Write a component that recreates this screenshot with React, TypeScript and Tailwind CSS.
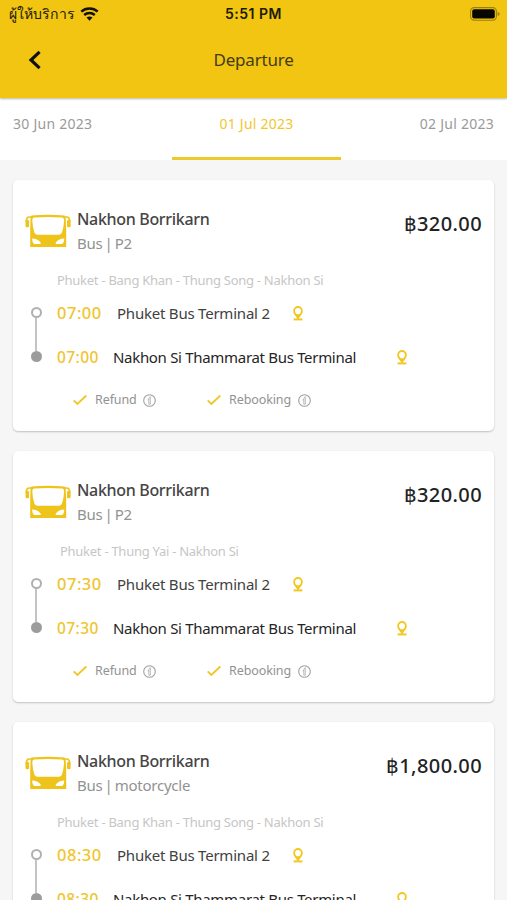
interface Trip {
  operator: string;
  vehicle: string;
  price: string;
  route: string;
  routeIndent?: boolean;
  time: string;
}

const dates = ['30 Jun 2023', '01 Jul 2023', '02 Jul 2023'];

const trips: Trip[] = [
  { operator: 'Nakhon Borrikarn', vehicle: 'Bus | P2', price: '320.00', route: 'Phuket - Bang Khan - Thung Song - Nakhon Si', time: '07:00' },
  { operator: 'Nakhon Borrikarn', vehicle: 'Bus | P2', price: '320.00', route: 'Phuket - Thung Yai - Nakhon Si', routeIndent: true, time: '07:30' },
  { operator: 'Nakhon Borrikarn', vehicle: 'Bus | motorcycle', price: '1,800.00', route: 'Phuket - Bang Khan - Thung Song - Nakhon Si', time: '08:30' },
];

function WifiIcon() {
  return (
    <svg width="19" height="15" viewBox="0 0 19 15" fill="none" stroke="#151000" className="shrink-0">
      <path d="M1.3 4.6C5.9 .5 13.1 .5 17.7 4.6" strokeWidth="2.5" />
      <path d="M4.2 8C7.2 5.3 11.8 5.3 14.8 8" strokeWidth="2.4" />
      <path d="M9.5 13.8L6.5 10.6Q9.5 8.3 12.5 10.6Z" fill="#151000" stroke="none" />
    </svg>
  );
}

function BatteryIcon() {
  return (
    <svg width="30" height="14" viewBox="0 0 30 14" className="shrink-0">
      <rect x=".6" y=".6" width="25.8" height="12.6" rx="3.6" fill="none" stroke="#9c7f10" strokeWidth="1.1" />
      <rect x="2.2" y="2.2" width="22.6" height="9.4" rx="2" fill="#080600" />
      <path d="M27.6 4.7Q29.6 5.4 29.6 6.9T27.6 9.1Z" fill="#9c7f10" />
    </svg>
  );
}

function BusIcon() {
  return (
    <svg width="46" height="34" viewBox="0 0 46 34" className="shrink-0">
      <path
        fillRule="evenodd"
        fill="#eec41b"
        d="M6.5 1.4Q23 -.1 39.5 1.4L40.6 3.2L41.2 15V33H5.2V15L5.6 3.2ZM9 3.6Q7.3 3.8 7.3 6.5Q7.6 13 9.4 18.6Q10.1 20.7 12 20.7H34.4Q36.3 20.7 37 18.6Q38.8 13 39.1 6.5Q39.1 3.8 37.4 3.6Q23 2.6 9 3.6ZM7.2 24.6Q12.5 24.8 15.6 28.5Q16.2 29.8 15 30H9Q7 28 7.2 24.6ZM39.2 24.6Q33.9 24.8 30.8 28.5Q30.2 29.8 31.4 30H37.4Q39.4 28 39.2 24.6Z"
      />
      <path d="M7 3H4.2Q1.6 3.2 1.4 6.4V8M39.4 3H41.8Q44.4 3.2 44.6 6.4V8" fill="none" stroke="#eec41b" strokeWidth="1.7" />
      <rect x=".5" y="6" width="3.6" height="7.2" rx="1.2" fill="#eec41b" />
      <rect x="42" y="6" width="3.6" height="7.2" rx="1.2" fill="#eec41b" />
    </svg>
  );
}

function PinIcon() {
  return (
    <svg width="10" height="15" viewBox="0 0 10 15" fill="none" stroke="#f2c722" className="shrink-0">
      <path d="M5 11.6L2.1 7.9Q1.1 6.5 1.1 4.8A3.9 3.8 0 0 1 8.9 4.8Q8.9 6.5 7.9 7.9Z" strokeWidth="1.8" />
      <path d="M2.6 8.3H7.4L5.8 12.4H4.2Z" fill="#f2c722" stroke="none" />
      <path d="M.6 13.4H9.4" strokeWidth="2" />
    </svg>
  );
}

function CheckIcon() {
  return (
    <svg width="14" height="12" viewBox="0 0 14 12" fill="none" stroke="#f0c62a" strokeWidth="1.9" className="shrink-0">
      <path d="M.7 6.3L4.4 10L13.3 1.5" />
    </svg>
  );
}

function InfoIcon() {
  return (
    <svg width="13" height="13" viewBox="0 0 13 13" fill="none" stroke="#a0a0a0" className="shrink-0">
      <circle cx="6.5" cy="6.5" r="5.8" strokeWidth="1.1" />
      <path d="M8.3 3Q6 2.4 5.8 4.8V10.2H7.3V3.6M4.6 5.8H5.8" strokeWidth=".7" />
    </svg>
  );
}

function Perk({ label, className }: { label: string; className: string }) {
  return (
    <div className={`flex items-center ${className}`}>
      <CheckIcon />
      <span className="ml-2 flex-1 whitespace-nowrap text-[12.5px] tracking-[-0.1px] text-[#929292]">{label}</span>
      <InfoIcon />
    </div>
  );
}

function TripCard({ trip }: { trip: Trip }) {
  return (
    <article className="h-[251px] shrink-0 rounded-[5px] bg-white pt-[27px] shadow-[0_1px_2px_rgba(0,0,0,0.22)]">
      <div className="flex h-[50px] pl-3 pr-3">
        <div className="pt-[7px]">
          <BusIcon />
        </div>
        <div className="ml-1.5 flex-1 whitespace-nowrap leading-[25px]">
          <h2 className="text-base font-medium tracking-[-0.32px] text-[#454545]">{trip.operator}</h2>
          <p className="text-[15px] tracking-[-0.25px] [word-spacing:-1.5px] text-[#929292]">{trip.vehicle}</p>
        </div>
        <div className="pt-1 text-xl font-medium leading-[26px] tracking-[0.4px] text-[#222]">฿{trip.price}</div>
      </div>

      <p className={`mt-[13px] h-5 whitespace-nowrap text-[13px] leading-5 tracking-[-0.27px] text-[#c6c6c6] ${trip.routeIndent ? 'pl-[47px]' : 'pl-11'}`}>
        {trip.route}
      </p>

      <div className="flex h-[89px]">
        <div className="flex w-11 flex-col items-center pl-0.5 pt-[17px]">
          <div className="size-[11px] shrink-0 rounded-full border-2 border-[#b0b0b0]" />
          <div className="h-[33px] w-[1.5px] bg-[#c3c3c3]" />
          <div className="size-[11px] shrink-0 rounded-full bg-[#9c9c9c]" />
        </div>
        <div className="flex-1 whitespace-nowrap">
          <div className="flex h-11 items-center pt-[3px]">
            <span className="w-[60px] text-[16.5px] font-medium tracking-[0.5px] text-[#f0c52e]">{trip.time}</span>
            <span className="w-[176px] text-[15px] tracking-[-0.22px] text-[#414141]">Phuket Bus Terminal 2</span>
            <PinIcon />
          </div>
          <div className="flex h-11 items-center pt-[3px]">
            <span className="w-14 text-[15.5px] font-medium tracking-[0.4px] text-[#f0c52e]">{trip.time}</span>
            <span className="w-[284px] text-[15px] tracking-[-0.31px] text-[#252525]">Nakhon Si Thammarat Bus Terminal</span>
            <PinIcon />
          </div>
        </div>
      </div>

      <div className="flex h-[42px] items-center pl-[60px]">
        <Perk label="Refund" className="w-[83px]" />
        <Perk label="Rebooking" className="ml-[51px] w-[104px]" />
      </div>
    </article>
  );
}

export default function App() {
  return (
    <div className="h-[900px] w-[507px] overflow-hidden bg-[#f6f6f6] font-['Noto_Sans','Open_Sans',sans-serif]">
      <header className="relative h-[98px] bg-[#f1c512] shadow-[0_1px_2px_rgba(90,80,20,0.4)]">
        <div className="grid h-7 grid-cols-3 items-center text-sm text-[#201a04]">
          <div className="flex items-center gap-[5px] pl-[9px]">
            <span className="w-[66px] whitespace-nowrap font-medium tracking-[0.1px]">ผู้ให้บริการ</span>
            <WifiIcon />
          </div>
          <span className="text-center font-['Inter',sans-serif] font-semibold tracking-[0.5px]">5:51 PM</span>
          <div className="flex justify-end pr-[7px]">
            <BatteryIcon />
          </div>
        </div>
        <div className="grid h-16 grid-cols-3 items-center">
          <button aria-label="Back" className="pl-7">
            <svg width="14" height="20" viewBox="0 0 14 20" fill="none" stroke="#111" strokeWidth="3.2">
              <path d="M11.6 1.8L3 10L11.6 18.2" />
            </svg>
          </button>
          <h1 className="text-center text-[17px] tracking-[-0.2px] text-[#453b12]">Departure</h1>
        </div>
      </header>

      <nav className="flex h-[62px] whitespace-nowrap bg-white px-[13px] text-sm tracking-[0.25px] text-[#9a9a9a]">
        <button className="w-[159px] pb-2.5 text-left">{dates[0]}</button>
        <button className="w-[169px] border-b-[3px] border-[#ecc92c] pb-[7px] text-[#f1c72e]">{dates[1]}</button>
        <button className="flex-1 pb-2.5 text-right">{dates[2]}</button>
      </nav>

      <main className="flex flex-col gap-5 px-[13px] pt-5">
        {trips.map((trip) => (
          <TripCard key={trip.time} trip={trip} />
        ))}
      </main>
    </div>
  );
}
